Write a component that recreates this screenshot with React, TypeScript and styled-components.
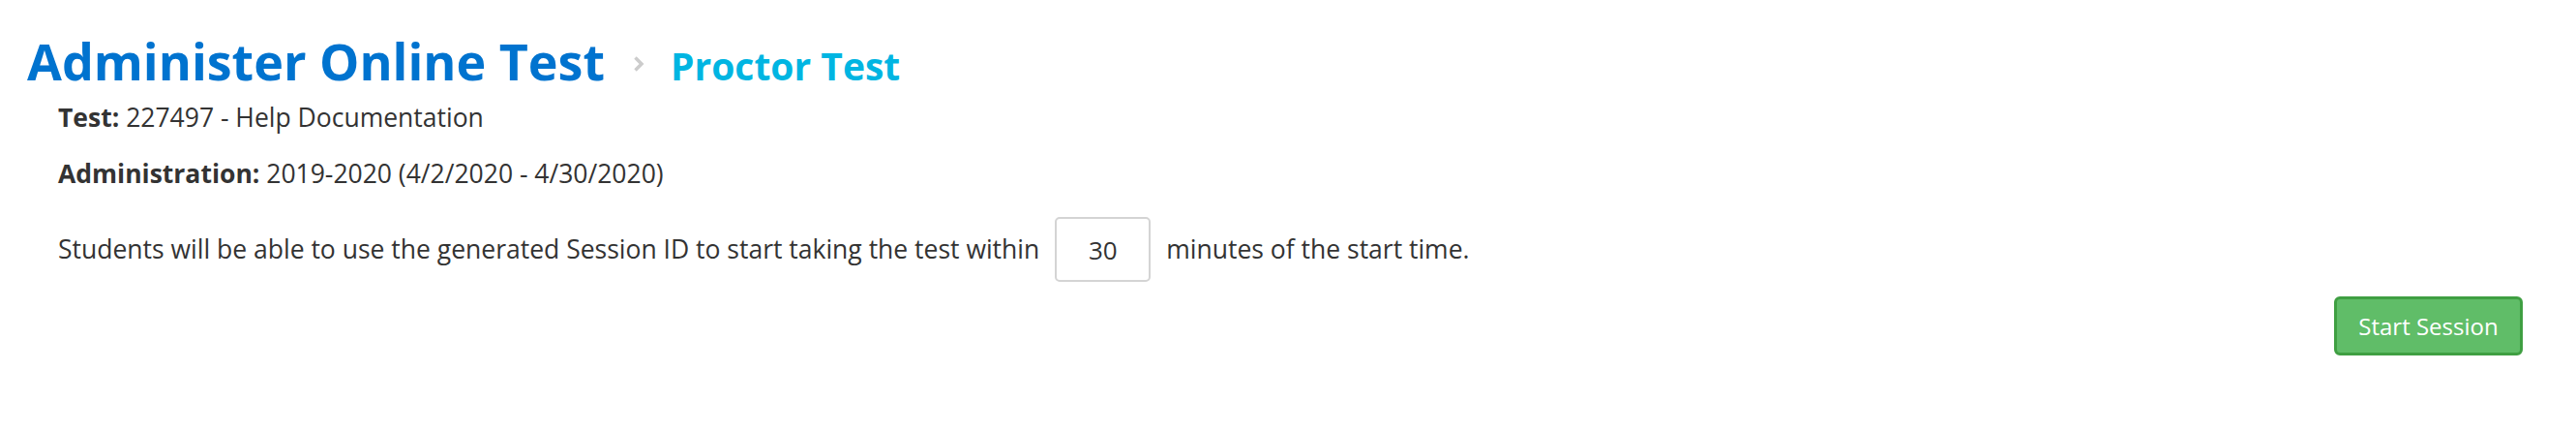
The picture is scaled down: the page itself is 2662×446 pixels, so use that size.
import React from 'react';
import styled, { createGlobalStyle } from 'styled-components';

const GlobalStyle = createGlobalStyle`
  html, body {
    margin: 0;
    padding: 0;
    background: #ffffff;
  }
  body {
    font-family: "Open Sans", "Liberation Sans", Arial, sans-serif;
    color: #333333;
  }
`;

const Page = styled.div`
  padding: 35px 55px 40px 28px;
`;

const TitleRow = styled.div`
  display: flex;
  align-items: baseline;
  height: 55px;
`;

const Title = styled.h1`
  margin: 0;
  font-size: 52px;
  line-height: 55px;
  font-weight: 700;
  color: #0073cf;
`;

const Crumb = styled.h2`
  margin: 0;
  font-size: 39px;
  line-height: 55px;
  font-weight: 700;
  color: #00b5e2;
`;

const Chevron = styled.span`
  display: inline-flex;
  align-self: center;
  margin: 6px 27px 0 29px;
`;

const Details = styled.div`
  padding-left: 32px;
  margin-top: 13px;
`;

const InfoLine = styled.p`
  margin: 0 0 21px;
  font-size: 26.5px;
  line-height: 37px;
  color: #333333;

  &:last-child {
    margin-bottom: 0;
  }
`;

const Label = styled.strong`
  font-weight: 700;
`;

const WindowRow = styled.div`
  display: flex;
  align-items: center;
  gap: 16px;
  margin-top: 26px;
  padding-left: 32px;
  font-size: 26.5px;
  line-height: 37px;
  color: #333333;
`;

const MinutesInput = styled.input`
  box-sizing: border-box;
  width: 99px;
  height: 67px;
  border: 2px solid #d4d4d4;
  border-radius: 5px;
  font-family: "Open Sans", "Liberation Sans", Arial, sans-serif;
  font-size: 26px;
  color: #333333;
  text-align: center;
  padding: 0;
  outline: none;
`;

const Actions = styled.div`
  display: flex;
  justify-content: flex-end;
  margin-top: 15px;
`;

const StartButton = styled.button`
  box-sizing: border-box;
  width: 195px;
  height: 61px;
  background: #60bd68;
  border: 3px solid #3f9f42;
  border-radius: 6px;
  color: #ffffff;
  font-family: "Open Sans", "Liberation Sans", Arial, sans-serif;
  font-size: 24px;
  cursor: pointer;
`;

const App: React.FC = () => {
  return (
    <>
      <GlobalStyle />
      <Page>
        <TitleRow>
          <Title>Administer Online Test</Title>
          <Chevron>
            <svg width="12" height="16" viewBox="0 0 12 16">
              <path d="M2.5 1.5 L9 8 L2.5 14.5" fill="none" stroke="#cccccc" strokeWidth="3.5" />
            </svg>
          </Chevron>
          <Crumb>Proctor Test</Crumb>
        </TitleRow>
        <Details>
          <InfoLine>
            <Label>Test:</Label> 227497 - Help Documentation
          </InfoLine>
          <InfoLine>
            <Label>Administration:</Label> 2019-2020 (4/2/2020 - 4/30/2020)
          </InfoLine>
        </Details>
        <WindowRow>
          <span>Students will be able to use the generated Session ID to start taking the test within</span>
          <MinutesInput defaultValue="30" />
          <span>minutes of the start time.</span>
        </WindowRow>
        <Actions>
          <StartButton>Start Session</StartButton>
        </Actions>
      </Page>
    </>
  );
};

export default App;
